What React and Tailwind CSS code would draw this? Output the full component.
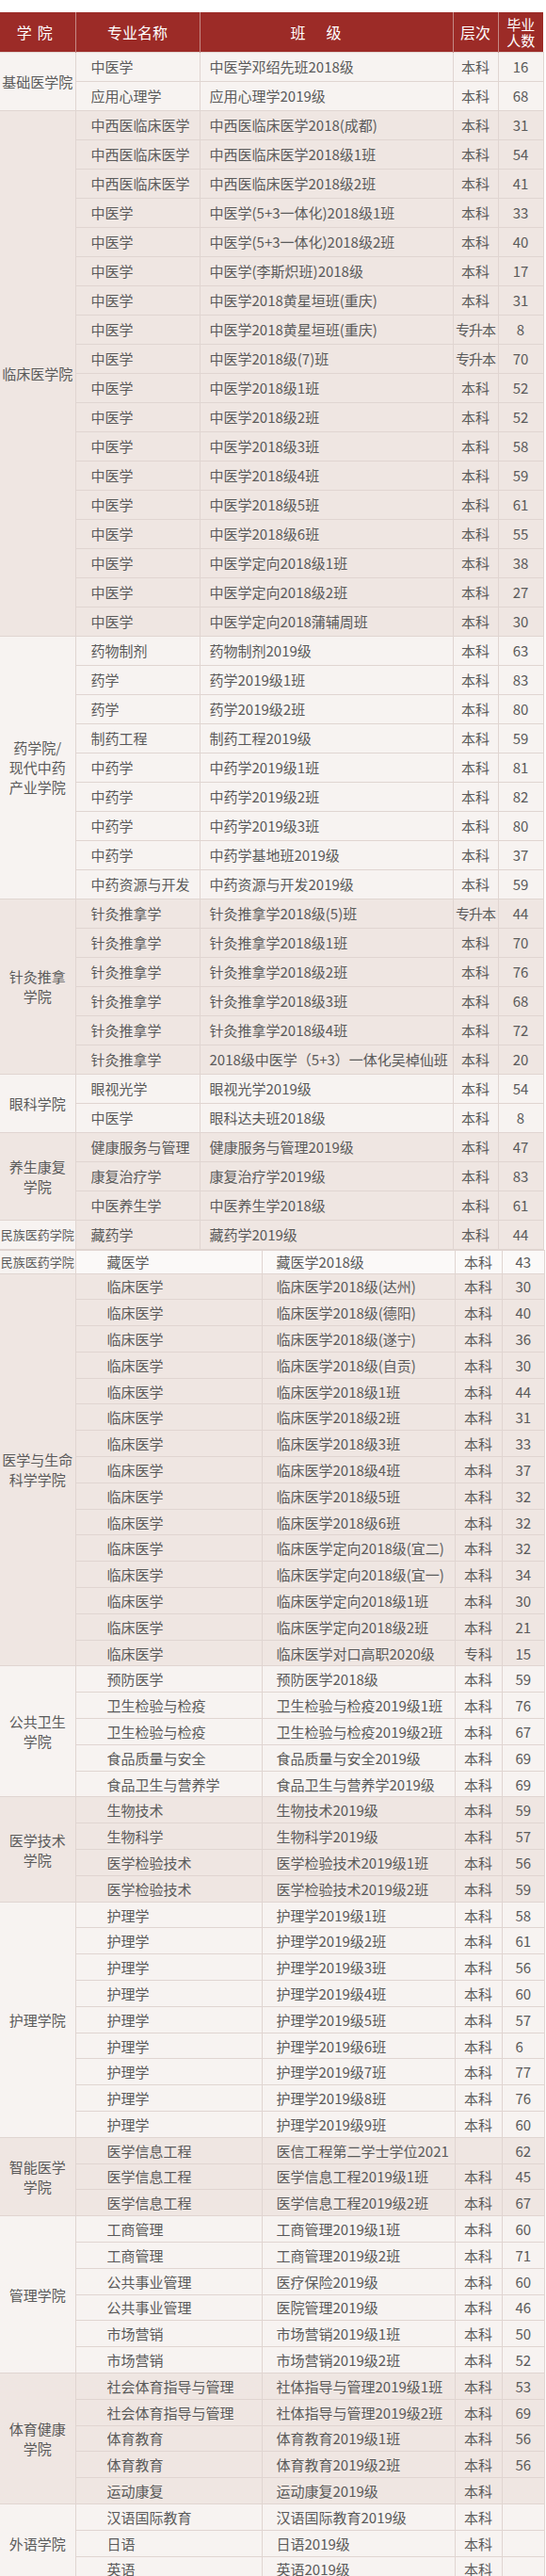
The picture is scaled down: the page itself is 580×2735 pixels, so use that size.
import React from "react";

const t1 = [
  {
    name: ["基础医学院"],
    tone: "light",
    rows: [
      ["中医学", "中医学邓绍先班2018级", "本科", "16"],
      ["应用心理学", "应用心理学2019级", "本科", "68"],
    ],
  },
  {
    name: ["临床医学院"],
    tone: "dark",
    rows: [
      ["中西医临床医学", "中西医临床医学2018(成都)", "本科", "31"],
      ["中西医临床医学", "中西医临床医学2018级1班", "本科", "54"],
      ["中西医临床医学", "中西医临床医学2018级2班", "本科", "41"],
      ["中医学", "中医学(5+3一体化)2018级1班", "本科", "33"],
      ["中医学", "中医学(5+3一体化)2018级2班", "本科", "40"],
      ["中医学", "中医学(李斯炽班)2018级", "本科", "17"],
      ["中医学", "中医学2018黄星垣班(重庆)", "本科", "31"],
      ["中医学", "中医学2018黄星垣班(重庆)", "专升本", "8"],
      ["中医学", "中医学2018级(7)班", "专升本", "70"],
      ["中医学", "中医学2018级1班", "本科", "52"],
      ["中医学", "中医学2018级2班", "本科", "52"],
      ["中医学", "中医学2018级3班", "本科", "58"],
      ["中医学", "中医学2018级4班", "本科", "59"],
      ["中医学", "中医学2018级5班", "本科", "61"],
      ["中医学", "中医学2018级6班", "本科", "55"],
      ["中医学", "中医学定向2018级1班", "本科", "38"],
      ["中医学", "中医学定向2018级2班", "本科", "27"],
      ["中医学", "中医学定向2018蒲辅周班", "本科", "30"],
    ],
  },
  {
    name: ["药学院/", "现代中药", "产业学院"],
    tone: "light",
    rows: [
      ["药物制剂", "药物制剂2019级", "本科", "63"],
      ["药学", "药学2019级1班", "本科", "83"],
      ["药学", "药学2019级2班", "本科", "80"],
      ["制药工程", "制药工程2019级", "本科", "59"],
      ["中药学", "中药学2019级1班", "本科", "81"],
      ["中药学", "中药学2019级2班", "本科", "82"],
      ["中药学", "中药学2019级3班", "本科", "80"],
      ["中药学", "中药学基地班2019级", "本科", "37"],
      ["中药资源与开发", "中药资源与开发2019级", "本科", "59"],
    ],
  },
  {
    name: ["针灸推拿", "学院"],
    tone: "dark",
    rows: [
      ["针灸推拿学", "针灸推拿学2018级(5)班", "专升本", "44"],
      ["针灸推拿学", "针灸推拿学2018级1班", "本科", "70"],
      ["针灸推拿学", "针灸推拿学2018级2班", "本科", "76"],
      ["针灸推拿学", "针灸推拿学2018级3班", "本科", "68"],
      ["针灸推拿学", "针灸推拿学2018级4班", "本科", "72"],
      ["针灸推拿学", "2018级中医学（5+3）一体化吴棹仙班", "本科", "20"],
    ],
  },
  {
    name: ["眼科学院"],
    tone: "light",
    rows: [
      ["眼视光学", "眼视光学2019级", "本科", "54"],
      ["中医学", "眼科达夫班2018级", "本科", "8"],
    ],
  },
  {
    name: ["养生康复", "学院"],
    tone: "dark",
    rows: [
      ["健康服务与管理", "健康服务与管理2019级", "本科", "47"],
      ["康复治疗学", "康复治疗学2019级", "本科", "83"],
      ["中医养生学", "中医养生学2018级", "本科", "61"],
    ],
  },
  {
    name: ["民族医药学院"],
    tone: "mixed",
    small: true,
    rows: [["藏药学", "藏药学2019级", "本科", "44"]],
  },
];

const t2 = [
  {
    name: ["医学与生命", "科学学院"],
    tone: "dark",
    rows: [
      ["临床医学", "临床医学2018级(达州)", "本科", "30"],
      ["临床医学", "临床医学2018级(德阳)", "本科", "40"],
      ["临床医学", "临床医学2018级(遂宁)", "本科", "36"],
      ["临床医学", "临床医学2018级(自贡)", "本科", "30"],
      ["临床医学", "临床医学2018级1班", "本科", "44"],
      ["临床医学", "临床医学2018级2班", "本科", "31"],
      ["临床医学", "临床医学2018级3班", "本科", "33"],
      ["临床医学", "临床医学2018级4班", "本科", "37"],
      ["临床医学", "临床医学2018级5班", "本科", "32"],
      ["临床医学", "临床医学2018级6班", "本科", "32"],
      ["临床医学", "临床医学定向2018级(宜二)", "本科", "32"],
      ["临床医学", "临床医学定向2018级(宜一)", "本科", "34"],
      ["临床医学", "临床医学定向2018级1班", "本科", "30"],
      ["临床医学", "临床医学定向2018级2班", "本科", "21"],
      ["临床医学", "临床医学对口高职2020级", "专科", "15"],
    ],
  },
  {
    name: ["公共卫生", "学院"],
    tone: "light",
    rows: [
      ["预防医学", "预防医学2018级", "本科", "59"],
      ["卫生检验与检疫", "卫生检验与检疫2019级1班", "本科", "76"],
      ["卫生检验与检疫", "卫生检验与检疫2019级2班", "本科", "67"],
      ["食品质量与安全", "食品质量与安全2019级", "本科", "69"],
      ["食品卫生与营养学", "食品卫生与营养学2019级", "本科", "69"],
    ],
  },
  {
    name: ["医学技术", "学院"],
    tone: "dark",
    rows: [
      ["生物技术", "生物技术2019级", "本科", "59"],
      ["生物科学", "生物科学2019级", "本科", "57"],
      ["医学检验技术", "医学检验技术2019级1班", "本科", "56"],
      ["医学检验技术", "医学检验技术2019级2班", "本科", "59"],
    ],
  },
  {
    name: ["护理学院"],
    tone: "light",
    rows: [
      ["护理学", "护理学2019级1班", "本科", "58"],
      ["护理学", "护理学2019级2班", "本科", "61"],
      ["护理学", "护理学2019级3班", "本科", "56"],
      ["护理学", "护理学2019级4班", "本科", "60"],
      ["护理学", "护理学2019级5班", "本科", "57"],
      ["护理学", "护理学2019级6班", "本科", "6"],
      ["护理学", "护理学2019级7班", "本科", "77"],
      ["护理学", "护理学2019级8班", "本科", "76"],
      ["护理学", "护理学2019级9班", "本科", "60"],
    ],
  },
  {
    name: ["智能医学", "学院"],
    tone: "dark",
    rows: [
      ["医学信息工程", "医信工程第二学士学位2021", "", "62"],
      ["医学信息工程", "医学信息工程2019级1班", "本科", "45"],
      ["医学信息工程", "医学信息工程2019级2班", "本科", "67"],
    ],
  },
  {
    name: ["管理学院"],
    tone: "light",
    rows: [
      ["工商管理", "工商管理2019级1班", "本科", "60"],
      ["工商管理", "工商管理2019级2班", "本科", "71"],
      ["公共事业管理", "医疗保险2019级", "本科", "60"],
      ["公共事业管理", "医院管理2019级", "本科", "46"],
      ["市场营销", "市场营销2019级1班", "本科", "50"],
      ["市场营销", "市场营销2019级2班", "本科", "52"],
    ],
  },
  {
    name: ["体育健康", "学院"],
    tone: "dark",
    rows: [
      ["社会体育指导与管理", "社体指导与管理2019级1班", "本科", "53"],
      ["社会体育指导与管理", "社体指导与管理2019级2班", "本科", "69"],
      ["体育教育", "体育教育2019级1班", "本科", "56"],
      ["体育教育", "体育教育2019级2班", "本科", "56"],
      ["运动康复", "运动康复2019级", "本科", ""],
    ],
  },
  {
    name: ["外语学院"],
    tone: "light",
    rows: [
      ["汉语国际教育", "汉语国际教育2019级", "本科", ""],
      ["日语", "日语2019级", "本科", ""],
      ["英语", "英语2019级", "本科", ""],
    ],
  },
];

const LIGHT = "bg-[#f7f3f1]";
const DARK = "bg-[#efe6e2]";
const cell = "border border-[#e0d5d1] whitespace-nowrap";

function GroupLabel({ lines, small }) {
  return (
    <div className={small ? "text-[13px] leading-[18px]" : "text-[15px] leading-[21px]"}>
      {lines.map((l) => (
        <div key={l}>{l}</div>
      ))}
    </div>
  );
}

function FirstTable() {
  return (
    <table className="table-fixed border-collapse w-[577px]">
      <colgroup>
        <col className="w-[80px]" />
        <col className="w-[132px]" />
        <col className="w-[269px]" />
        <col className="w-[48px]" />
        <col className="w-[48px]" />
      </colgroup>
      <thead>
        <tr className="h-[42px] bg-[#9c2b27] text-white text-[16px]">
          <th className="border-r border-[#c48985] font-normal tracking-[6px]">学院</th>
          <th className="border-r border-[#c48985] font-normal">专业名称</th>
          <th className="border-r border-[#c48985] font-normal tracking-[22px]">班级</th>
          <th className="border-r border-[#c48985] font-normal">层次</th>
          <th className="font-normal text-[15px] leading-[17px]">
            毕业
            <br />
            人数
          </th>
        </tr>
      </thead>
      <tbody>
        {t1.map((g) =>
          g.rows.map((r, i) => {
            const rowBg = g.tone === "light" ? LIGHT : DARK;
            const labelBg = g.tone === "dark" ? DARK : LIGHT;
            return (
              <tr key={g.name[0] + i} className={`h-[31px] ${rowBg}`}>
                {i === 0 && (
                  <td rowSpan={g.rows.length} className={`${cell} ${labelBg} border-l-0 text-center`}>
                    <GroupLabel lines={g.name} small={g.small} />
                  </td>
                )}
                <td className={`${cell} pl-4`}>{r[0]}</td>
                <td className={`${cell} pl-[10px]`}>{r[1]}</td>
                <td className={`${cell} text-center ${r[2].length > 2 ? "tracking-[-1px]" : ""}`}>{r[2]}</td>
                <td className={`${cell} text-center`}>{r[3]}</td>
              </tr>
            );
          })
        )}
      </tbody>
    </table>
  );
}

function SecondTable() {
  return (
    <table className="table-fixed border-collapse w-[578px]">
      <colgroup>
        <col className="w-[80px]" />
        <col className="w-[198px]" />
        <col className="w-[205px]" />
        <col className="w-[50px]" />
        <col className="w-[45px]" />
      </colgroup>
      <tbody>
        <tr className="h-[25px] bg-[#fbf9f8]">
          <td className={`${cell} ${LIGHT} border-l-0 text-center`}>
            <GroupLabel lines={["民族医药学院"]} small />
          </td>
          <td className={`${cell} pl-[33px]`}>藏医学</td>
          <td className={`${cell} pl-[15px]`}>藏医学2018级</td>
          <td className={`${cell} text-center`}>本科</td>
          <td className={`${cell} pl-[14px]`}>43</td>
        </tr>
        {t2.map((g) =>
          g.rows.map((r, i) => {
            const bg = g.tone === "light" ? LIGHT : DARK;
            return (
              <tr key={g.name[0] + i} className={`h-[27.8px] ${bg}`}>
                {i === 0 && (
                  <td rowSpan={g.rows.length} className={`${cell} border-l-0 text-center`}>
                    <GroupLabel lines={g.name} />
                  </td>
                )}
                <td className={`${cell} pl-[33px]`}>{r[0]}</td>
                <td className={`${cell} pl-[15px]`}>{r[1]}</td>
                <td className={`${cell} text-center`}>{r[2]}</td>
                <td className={`${cell} pl-[14px]`}>{r[3]}</td>
              </tr>
            );
          })
        )}
      </tbody>
    </table>
  );
}

export default function App() {
  return (
    <div className="w-[580px] h-[2735px] overflow-hidden bg-white pt-[13px] font-['Noto_Sans_CJK_SC','Noto_Sans',sans-serif] text-[15px] text-[#5a5a5a] leading-none">
      <FirstTable />
      <SecondTable />
    </div>
  );
}
